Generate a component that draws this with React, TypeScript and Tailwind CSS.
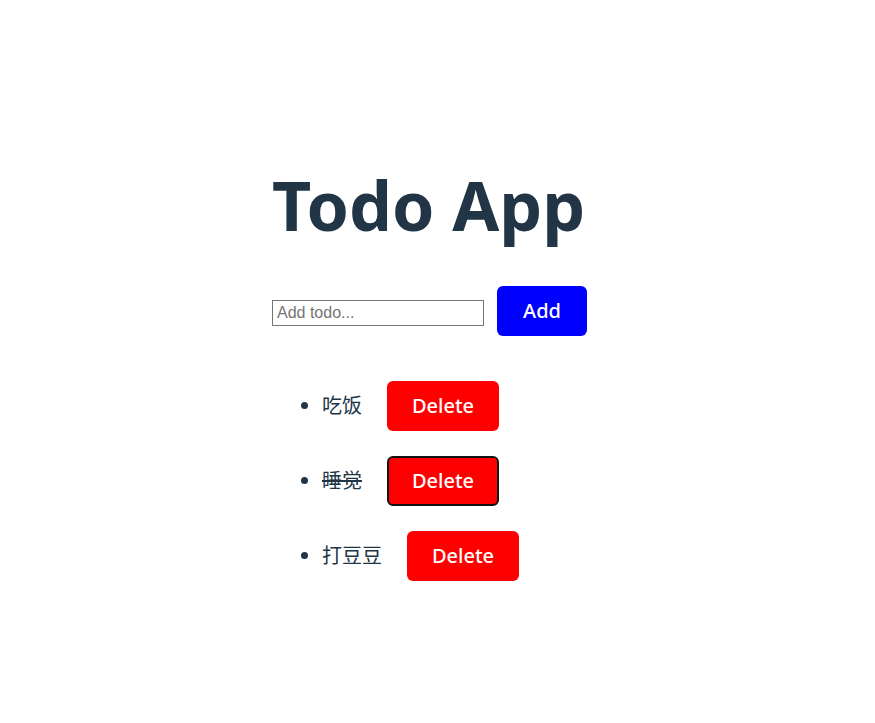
export default function App() {
  const todos = [
    { text: "吃饭", done: false, focus: false },
    { text: "睡觉", done: true, focus: true },
    { text: "打豆豆", done: false, focus: false },
  ];
  return (
    <div
      className="min-h-[723px] bg-white text-[#213547] pl-[272px] pt-[160px]"
      style={{ fontFamily: '"Noto Sans", "Noto Sans CJK SC", sans-serif' }}
    >
      <h1 className="text-[68px] font-bold leading-[90px] m-0">Todo App</h1>
      <div className="flex items-center gap-[13px] mt-[36px]">
        <input
          type="text"
          placeholder="Add todo..."
          className="w-[212px] h-[26px] mt-[4px] border border-[#767676] px-[4px] text-[16px] text-black placeholder:text-[#757575] outline-none"
          style={{ fontFamily: '"Liberation Sans", Arial, sans-serif' }}
        />
        <button className="w-[90px] h-[50px] rounded-[6px] bg-[#0000ff] text-white text-[20px] font-medium">
          Add
        </button>
      </div>
      <ul className="list-disc pl-[50px] mt-[45px] flex flex-col gap-[25px]">
        {todos.map((t) => (
          <li key={t.text} className="text-[20px]">
            <div className="flex items-center">
              <span className={t.done ? "line-through" : ""}>{t.text}</span>
              <button
                className={
                  "ml-[25px] w-[112px] h-[50px] rounded-[6px] bg-[#ff0000] text-white text-[20px] font-medium border-2 " +
                  (t.focus ? "border-[#111111]" : "border-transparent")
                }
              >
                Delete
              </button>
            </div>
          </li>
        ))}
      </ul>
    </div>
  );
}
